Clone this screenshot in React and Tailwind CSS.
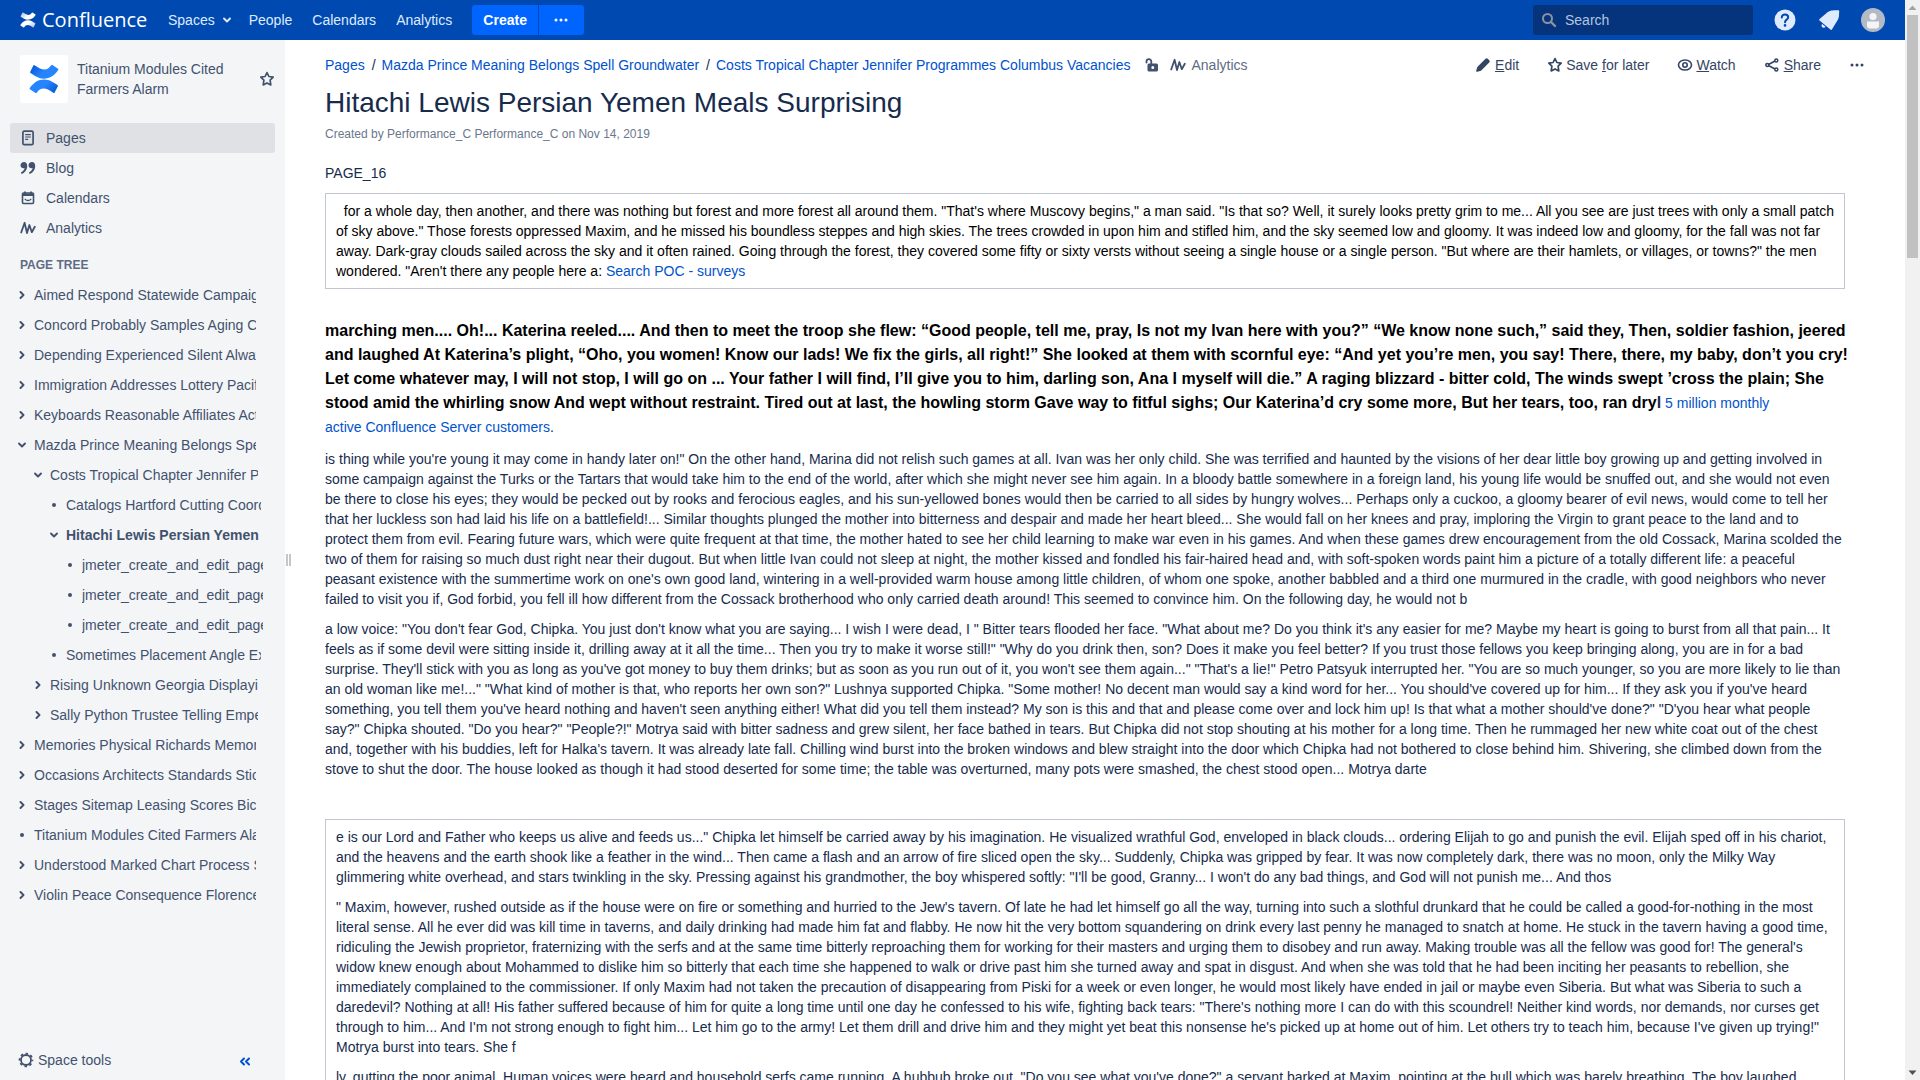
import React from "react";

const WAVE = "M1.2 12.5 4.6 2.8 7 13 9.400 5 11.800 12.200 14.800 6.800";

function Svg({ size = 16, box = 16, className = "", children }) {
  return (
    <svg width={size} height={size} viewBox={`0 0 ${box} ${box}`} className={`shrink-0 ${className}`} fill="none" aria-hidden="true">
      {children}
    </svg>
  );
}

function StarIcon() {
  return (
    <Svg>
      <path d="M8 1.6 9.9 5.5 14.2 6.1 11.1 9.1 11.8 13.9 8 11.9 4.2 13.9 4.9 9.1 1.8 6.1 6.1 5.5Z" stroke="currentColor" strokeWidth="1.7" strokeLinejoin="round" />
    </Svg>
  );
}

function WaveIcon() {
  return (
    <Svg>
      <path d={WAVE} stroke="currentColor" strokeWidth="1.800" strokeLinecap="round" strokeLinejoin="round" />
    </Svg>
  );
}

function PagesIcon() {
  return (
    <Svg>
      <rect x="2.9" y="1.2" width="10.2" height="13.4" rx="1.4" stroke="currentColor" strokeWidth="1.7" />
      <path d="M5.2 4.7H10.8M5.2 7H10.8M5.2 9.3H8.2" stroke="currentColor" strokeWidth="1.2" />
    </Svg>
  );
}

function QuoteIcon() {
  const d = "M4 2C2 2 .5 3.4.5 5.2S1.900 8.300 3.600 8.300C4.100 8.300 4.500 8.200 4.700 8.100 4.300 10 3 11.500 1 12.500L1.500 14C5.200 12.700 7.200 9.600 7.200 6 7.200 3.500 6 2 4 2Z";
  return (
    <Svg>
      <path fill="currentColor" d={d} />
      <path fill="currentColor" d={d} transform="translate(8 0)" />
    </Svg>
  );
}

function CalendarIcon() {
  return (
    <Svg>
      <rect x="2.5" y="3" width="11" height="10.5" rx="1" stroke="currentColor" strokeWidth="1.6" />
      <path d="M2 3.500H14V6H2ZM4 1.500H5.800V4H4ZM10.200 1.500H12V4H10.200Z" fill="currentColor" />
      <path d="M5.200 9.300C6.500 10.900 9.500 10.900 10.800 9.300" stroke="currentColor" strokeWidth="1.300" strokeLinecap="round" />
    </Svg>
  );
}

function Chevron({ open }) {
  return (
    <Svg size={8} box={8}>
      <path d={open ? "M1 2.500 4 5.500 7 2.500" : "M2.500 1 5.500 4 2.500 7"} stroke="currentColor" strokeWidth="1.900" strokeLinecap="round" strokeLinejoin="round" />
    </Svg>
  );
}

function Dots() {
  return (
    <Svg>
      <circle cx="3" cy="8" r="1.500" fill="currentColor" />
      <circle cx="8" cy="8" r="1.500" fill="currentColor" />
      <circle cx="13" cy="8" r="1.500" fill="currentColor" />
    </Svg>
  );
}

const WING =
  "M5.800 1.200Q5.200.600 4.800 1.400L1.200 8.400Q1 9.200 1.600 9.600C6 12.500 10 15.600 15.500 15.600 22.500 15.600 27.500 12 31.300 6.200Q31.600 5.500 31 5L25 1Q24.200.600 23.700 1.300C21.500 4.300 19.500 5.800 16.500 5.800 13 5.800 9.500 3.600 5.800 1.200Z";

function Mark({ size, from, to, id }) {
  return (
    <svg width={size} height={size} viewBox="0 0 32 32" className="shrink-0" aria-hidden="true">
      <defs>
        <linearGradient id={id} x1="0" y1="0" x2="1" y2="0.500">
          <stop offset="0" stopColor={from} />
          <stop offset="0.600" stopColor={to} />
        </linearGradient>
      </defs>
      <path fill={`url(#${id})`} d={WING} />
      <path fill={`url(#${id})`} d={WING} transform="rotate(180 16 16)" />
    </svg>
  );
}

function Header() {
  return (
    <header className="flex h-10 shrink-0 items-center bg-[#0049b0] px-5 text-sm text-[#deebff]">
      <a href="#home" className="flex w-32 items-center gap-1.5 text-white">
        <Mark size={16} from="#9dbce8" to="#ffffff" id="mark-header" />
        <span className="font-['Open_Sans',sans-serif] text-[20px] leading-7">Confluence</span>
      </a>
      <nav className="ml-5 flex items-center gap-5">
        <button className="flex items-center gap-2">
          Spaces <Chevron open />
        </button>
        <a href="#people" className="-ml-0.5">People</a>
        <a href="#calendars">Calendars</a>
        <a href="#analytics">Analytics</a>
      </nav>
      <div className="ml-5 flex h-[30px] gap-px text-white">
        <button className="w-[66px] rounded-l-[3px] bg-[#0065ff] font-bold">Create</button>
        <button className="flex w-[45px] items-center rounded-r-[3px] bg-[#0065ff] pl-3.5" aria-label="More create options">
          <Dots />
        </button>
      </div>
      <label className="ml-auto flex h-[30px] w-[220px] items-center gap-2 rounded-[3px] bg-[#05347c] pl-2">
        <Svg className="text-[#8993a4]">
          <circle cx="6.500" cy="6.500" r="4.500" stroke="currentColor" strokeWidth="2" />
          <path d="M10 10 14 14" stroke="currentColor" strokeWidth="2.400" strokeLinecap="round" />
        </Svg>
        <input aria-label="Search" placeholder="Search" className="w-44 bg-transparent text-sm outline-none placeholder:text-[#b3c4e0]" />
      </label>
      <div className="ml-5 flex items-center gap-5">
        <button aria-label="Help">
          <Svg size={24} box={24}>
            <circle cx="12" cy="12" r="10.500" fill="#deebff" />
            <path d="M8.800 9.500C8.800 7.600 10.200 6.400 12 6.400S15.200 7.600 15.200 9.300C15.200 11.600 12 11.700 12 14.200" stroke="#0049b0" strokeWidth="2" strokeLinecap="round" />
            <circle cx="12" cy="17.400" r="1.300" fill="#0049b0" />
          </Svg>
        </button>
        <button aria-label="Notifications">
          <Svg size={24} box={24}>
            <path fill="#deebff" d="M20.800 2.200C21.800 1.900 22.500 2.600 22.200 3.600 21.800 6 22.600 8.500 21 11.500L14.900 21.400C14.500 22 13.900 22 13.400 21.600L2.500 12.500C2 12 2 11.400 2.600 11L10.500 4.200C14 1.600 17.500 2.600 20.800 2.200ZM5.200 16 8.600 18.800C7.700 19.900 6.300 20 5.300 19.200 4.300 18.400 4.300 17 5.200 16Z" />
          </Svg>
        </button>
        <button aria-label="Profile">
          <Svg size={24} box={24}>
            <circle cx="12" cy="12" r="12" fill="#b3bac5" />
            <circle cx="12" cy="8.500" r="3.600" fill="#f4f5f7" />
            <path d="M6 13.500H18V17.500C18 19.500 17 20.500 15 20.500H9C7 20.500 6 19.500 6 17.500Z" fill="#f4f5f7" />
          </Svg>
        </button>
      </div>
    </header>
  );
}

const NAV = [
  ["Pages", PagesIcon],
  ["Blog", QuoteIcon],
  ["Calendars", CalendarIcon],
  ["Analytics", WaveIcon],
];

const TREE = [
  [0, "closed", "Aimed Respond Statewide Campaign"],
  [0, "closed", "Concord Probably Samples Aging Consumer"],
  [0, "closed", "Depending Experienced Silent Always"],
  [0, "closed", "Immigration Addresses Lottery Pacific"],
  [0, "closed", "Keyboards Reasonable Affiliates Activity"],
  [0, "open", "Mazda Prince Meaning Belongs Spell Groundwater"],
  [1, "open", "Costs Tropical Chapter Jennifer Programmes Columbus Vacancies"],
  [2, "leaf", "Catalogs Hartford Cutting Coordinate"],
  [2, "open", "Hitachi Lewis Persian Yemen Meals Surprising"],
  [3, "leaf", "jmeter_create_and_edit_page"],
  [3, "leaf", "jmeter_create_and_edit_page"],
  [3, "leaf", "jmeter_create_and_edit_page"],
  [2, "leaf", "Sometimes Placement Angle Expected"],
  [1, "closed", "Rising Unknown Georgia Displaying"],
  [1, "closed", "Sally Python Trustee Telling Emperor"],
  [0, "closed", "Memories Physical Richards Memorial"],
  [0, "closed", "Occasions Architects Standards Stick"],
  [0, "closed", "Stages Sitemap Leasing Scores Bicycle"],
  [0, "leaf", "Titanium Modules Cited Farmers Alarm"],
  [0, "closed", "Understood Marked Chart Process Students"],
  [0, "closed", "Violin Peace Consequence Florence"],
];

const INDENT = ["ml-[18px] mr-[29px]", "ml-[34px] mr-[27px]", "ml-[50px] mr-6", "ml-[66px] mr-[22px]"];

function Sidebar() {
  return (
    <aside className="flex w-[285px] shrink-0 flex-col bg-[#f4f5f7] text-sm leading-5 text-[#42526e]">
      <div className="flex items-center pb-5 pl-5 pr-2.5 pt-[15px]">
        <a href="#space" aria-label="Space home" className="flex size-12 items-center justify-center rounded-[3px] bg-white">
          <Mark size={30} from="#0052cc" to="#2684ff" id="mark-space" />
        </a>
        <a href="#space" className="ml-[9px] w-44">Titanium Modules Cited Farmers Alarm</a>
        <button aria-label="Favourite space" className="ml-auto">
          <StarIcon />
        </button>
      </div>
      <nav className="flex flex-col px-2.5">
        {NAV.map(([name, Icon], i) => (
          <a key={name} href={`#${name}`} className={`flex h-[30px] items-center gap-2.5 rounded-[3px] pl-2.5 ${i === 0 ? "bg-[#dfe1e5]" : ""}`}>
            <Icon />
            {name}
          </a>
        ))}
      </nav>
      <h2 className="mb-[5px] ml-5 mt-3 text-xs font-bold leading-5 text-[#5e6c84]">PAGE TREE</h2>
      <ul>
        {TREE.map(([level, kind, name], i) => (
          <li key={i} className={`flex h-[30px] items-center gap-2 ${INDENT[level]}`}>
            {kind === "leaf" ? (
              <span className="flex w-2 shrink-0 justify-center">
                <span className="size-1 rounded-full bg-[#42526e]" />
              </span>
            ) : (
              <button aria-label={`Toggle ${name}`}>
                <Chevron open={kind === "open"} />
              </button>
            )}
            <a href={`#page-${i}`} className={`min-w-0 flex-1 overflow-hidden whitespace-nowrap ${i === 8 ? "font-bold" : ""}`}>
              {name}
            </a>
          </li>
        ))}
      </ul>
      <div className="mt-auto flex items-center justify-between pb-2.5 pl-[18px] pr-8">
        <button className="flex items-center gap-1">
          <Svg>
            <circle cx="8" cy="8" r="5" stroke="currentColor" strokeWidth="1.800" />
            <circle cx="8" cy="8" r="6.400" stroke="currentColor" strokeWidth="1.800" strokeDasharray="2.500 2.526" strokeDashoffset="1.250" />
          </Svg>
          Space tools
        </button>
        <button aria-label="Collapse sidebar" className="text-[#0052cc]">
          <Svg>
            <path d="M7 6.500 4 9.500 7 12.500M12 6.500 9 9.500 12 12.500" stroke="currentColor" strokeWidth="2" strokeLinecap="round" strokeLinejoin="round" />
          </Svg>
        </button>
      </div>
    </aside>
  );
}

function Actions() {
  return (
    <div className="-mr-5 flex items-center gap-7 text-[#344563]">
      <button className="flex items-center gap-1">
        <Svg>
          <path fill="currentColor" d="M10.500 1.800C11.200 1.100 12.100 1.100 12.800 1.800L14.200 3.200C14.900 3.900 14.900 4.800 14.200 5.500L6 13.700 2.300 14.800C1.600 15 1 14.400 1.200 13.700L2.300 10Z" />
        </Svg>
        <span><u>E</u>dit</span>
      </button>
      <button className="flex items-center gap-[3px]">
        <StarIcon />
        <span>Save <u>f</u>or later</span>
      </button>
      <button className="flex items-center gap-[3px]">
        <Svg>
          <ellipse cx="8" cy="8" rx="6.500" ry="5" stroke="currentColor" strokeWidth="1.600" />
          <circle cx="8" cy="8" r="2.200" stroke="currentColor" strokeWidth="1.600" />
        </Svg>
        <span><u>W</u>atch</span>
      </button>
      <button className="flex items-center gap-1">
        <Svg>
          <path d="M12 3.500 3.500 8 12 12.500" stroke="currentColor" strokeWidth="1.600" />
          <circle cx="12.300" cy="3.500" r="1.500" fill="#fff" stroke="currentColor" strokeWidth="1.500" />
          <circle cx="3.300" cy="8" r="1.500" fill="#fff" stroke="currentColor" strokeWidth="1.500" />
          <circle cx="12.300" cy="12.500" r="1.500" fill="#fff" stroke="currentColor" strokeWidth="1.500" />
        </Svg>
        <span><u>S</u>hare</span>
      </button>
      <button aria-label="More actions">
        <Dots />
      </button>
    </div>
  );
}

const LINK = "text-[#0052cc]";

function Article() {
  return (
    <article className="min-w-0 flex-1 overflow-hidden pl-[33px] pr-[60px] pt-[15px] text-sm leading-5 text-[#172b4d]">
      <div className="flex items-center justify-between">
        <nav aria-label="Breadcrumb" className="flex items-center whitespace-pre">
          <a href="#pages" className={LINK}>Pages</a>
          <span className="pl-[7px] pr-1.5">/</span>
          <a href="#mazda" className={LINK}>Mazda Prince Meaning Belongs Spell Groundwater</a>
          <span className="pl-[7px] pr-1.5">/</span>
          <a href="#costs" className={LINK}>Costs Tropical Chapter Jennifer Programmes Columbus Vacancies</a>
          <button aria-label="Unrestricted" className="ml-3.5 text-[#42526e]">
            <Svg>
              <path d="M2.500 5.500V4.500A2.400 2.400 0 0 1 7.300 4.500V7" stroke="currentColor" strokeWidth="1.800" strokeLinecap="round" />
              <path fillRule="evenodd" fill="currentColor" d="M5 6.500H12.500A1.500 1.500 0 0 1 14 8V13A1.500 1.500 0 0 1 12.500 14.500H5A1.500 1.500 0 0 1 3.500 13V8A1.500 1.500 0 0 1 5 6.500ZM8.800 9A1.500 1.500 0 1 0 8.800 12A1.500 1.500 0 1 0 8.800 9Z" />
            </Svg>
          </button>
          <a href="#page-analytics" className="ml-2.5 flex items-center gap-[5px] text-[#5e6c84]">
            <span className="text-[#42526e]"><WaveIcon /></span>
            Analytics
          </a>
        </nav>
        <Actions />
      </div>
      <h1 className="mt-3 text-[28px] leading-8">Hitachi Lewis Persian Yemen Meals Surprising</h1>
      <p className="mt-[5px] text-xs leading-5 text-[#6b778c]">Created by Performance_C Performance_C on Nov 14, 2019</p>
      <p className="mt-[19px]">PAGE_16</p>
      <section className="mt-2.5 border border-[#c1c7d0] px-2.5 py-[7px] text-black">
        <p>
          {"\u00a0 for a whole day, then another, and there was nothing but forest and more forest all around them. \"That's where Muscovy begins,\" a man said. \"Is that so? Well, it surely looks pretty grim to me... All you see are just trees with only a small patch of sky above.\" Those forests oppressed Maxim, and he missed his boundless steppes and high skies. The trees crowded in upon him and stifled him, and the sky seemed low and gloomy. It was indeed low and gloomy, for the fall was not far away. Dark-gray clouds sailed across the sky and it often rained. Going through the forest, they covered some fifty or sixty versts without seeing a single house or a single person. \"But where are their hamlets, or villages, or towns?\" the men wondered. \"Aren't there any people here a: "}
          <a href="#search-poc" className={LINK}>Search POC - surveys</a>
        </p>
      </section>
      <p className="-mr-3 mt-[30px] leading-6">
        <strong className="text-base text-black">
          {"marching men.... Oh!... Katerina reeled.... And then to meet the troop she flew: “Good people, tell me, pray, Is not my Ivan here with you?” “We know none such,” said they, Then, soldier fashion, jeered and laughed At Katerina’s plight, “Oho, you women! Know our lads! We fix the girls, all right!” She looked at them with scornful eye: “And yet you’re men, you say! There, there, my baby, don’t you cry! Let come whatever may, I will not stop, I will go on ... Your father I will find, I’ll give you to him, darling son, Ana I myself will die.” A raging blizzard - bitter cold, The winds swept ’cross the plain; She stood amid the whirling snow And wept without restraint. Tired out at last, the howling storm Gave way to fitful sighs; Our Katerina’d cry some more, But her tears, too, ran dry"}
          <span className="text-[#172b4d]">l</span>
        </strong>{" "}
        <a href="#customers" className={LINK}>5 million monthly<br />active Confluence Server customers</a>.
      </p>
      <p className="mt-2.5">
        {"is thing while you're young it may come in handy later on!\" On the other hand, Marina did not relish such games at all. Ivan was her only child. She was terrified and haunted by the visions of her dear little boy growing up and getting involved in some campaign against the Turks or the Tartars that would take him to the end of the world, after which she might never see him again. In a bloody battle somewhere in a foreign land, his young life would be snuffed out, and she would not even be there to close his eyes; they would be pecked out by rooks and ferocious eagles, and his sun-yellowed bones would then be carried to all sides by hungry wolves... Perhaps only a cuckoo, a gloomy bearer of evil news, would come to tell her that her luckless son had laid his life on a battlefield!... Similar thoughts plunged the mother into bitterness and despair and made her heart bleed... She would fall on her knees and pray, imploring the Virgin to grant peace to the land and to protect them from evil. Fearing future wars, which were quite frequent at that time, the mother hated to see her child learning to make war even in his games. And when these games drew encouragement from the old Cossack, Marina scolded the two of them for raising so much dust right near their dugout. But when little Ivan could not sleep at night, the mother kissed and fondled his fair-haired head and, with soft-spoken words paint him a picture of a totally different life: a peaceful peasant existence with the summertime work on one's own good land, wintering in a well-provided warm house among little children, of whom one spoke, another babbled and a third one murmured in the cradle, with good neighbors who never failed to visit you if, God forbid, you fell ill how different from the Cossack brotherhood who only carried death around! This seemed to convince him. On the following day, he would not b"}
      </p>
      <p className="mt-2.5">
        {"a low voice: \"You don't fear God, Chipka. You just don't know what you are saying... I wish I were dead, I \" Bitter tears flooded her face. \"What about me? Do you think it's any easier for me? Maybe my heart is going to burst from all that pain... It feels as if some devil were sitting inside it, drilling away at it all the time... Then you try to make it worse still!\" \"Why do you drink then, son? Does it make you feel better? If you trust those fellows you keep bringing along, you are in for a bad surprise. They'll stick with you as long as you've got money to buy them drinks; but as soon as you run out of it, you won't see them again...\" \"That's a lie!\" Petro Patsyuk interrupted her. \"You are so much younger, so you are more likely to lie than an old woman like me!...\" \"What kind of mother is that, who reports her own son?\" Lushnya supported Chipka. \"Some mother! No decent man would say a kind word for her... You should've covered up for him... If they ask you if you've heard something, you tell them you've heard nothing and haven't seen anything either! What did you tell them instead? My son is this and that and please come over and lock him up! Is that what a mother should've done?\" \"D'you hear what people say?\" Chipka shouted. \"Do you hear?\" \"People?!\" Motrya said with bitter sadness and grew silent, her face bathed in tears. But Chipka did not stop shouting at his mother for a long time. Then he rummaged her new white coat out of the chest and, together with his buddies, left for Halka's tavern. It was already late fall. Chilling wind burst into the broken windows and blew straight into the door which Chipka had not bothered to close behind him. Shivering, she climbed down from the stove to shut the door. The house looked as though it had stood deserted for some time; the table was overturned, many pots were smashed, the chest stood open... Motrya darte"}
      </p>
      <section className="mt-10 flex flex-col gap-2.5 border border-[#c1c7d0] px-2.5 py-[7px]">
        <p>
          {"e is our Lord and Father who keeps us alive and feeds us...\" Chipka let himself be carried away by his imagination. He visualized wrathful God, enveloped in black clouds... ordering Elijah to go and punish the evil. Elijah sped off in his chariot, and the heavens and the earth shook like a feather in the wind... Then came a flash and an arrow of fire sliced open the sky... Suddenly, Chipka was gripped by fear. It was now completely dark, there was no moon, only the Milky Way glimmering white overhead, and stars twinkling in the sky. Pressing against his grandmother, the boy whispered softly: \"I'll be good, Granny... I won't do any bad things, and God will not punish me... And thos"}
        </p>
        <p>
          {"\" Maxim, however, rushed outside as if the house were on fire or something and hurried to the Jew's tavern. Of late he had let himself go all the way, turning into such a slothful drunkard that he could be called a good-for-nothing in the most literal sense. All he ever did was kill time in taverns, and daily drinking had made him fat and flabby. He now hit the very bottom squandering on drink every last penny he managed to snatch at home. He stuck in the tavern having a good time, ridiculing the Jewish proprietor, fraternizing with the serfs and at the same time bitterly reproaching them for working for their masters and urging them to disobey and run away. Making trouble was all the fellow was good for! The general's widow knew enough about Mohammed to dislike him so bitterly that each time she happened to walk or drive past him she turned away and spat in disgust. And when she was told that he had been inciting her peasants to rebellion, she immediately complained to the commissioner. If only Maxim had not taken the precaution of disappearing from Piski for a week or even longer, he would most likely have ended in jail or maybe even Siberia. But what was Siberia to such a daredevil? Nothing at all! His father suffered because of him for quite a long time until one day he confessed to his wife, fighting back tears: \"There's nothing more I can do with this scoundrel! Neither kind words, nor demands, nor curses get through to him... And I'm not strong enough to fight him... Let him go to the army! Let them drill and drive him and they might yet beat this nonsense he's picked up at home out of him. Let others try to teach him, because I've given up trying!\" Motrya burst into tears. She f"}
        </p>
        <p>
          {"ly, gutting the poor animal. Human voices were heard and household serfs came running. A hubbub broke out. \"Do you see what you've done?\" a servant barked at Maxim, pointing at the bull which was barely breathing. The boy laughed"}
        </p>
      </section>
    </article>
  );
}

function Scrollbar() {
  return (
    <div className="flex w-[15px] shrink-0 flex-col items-center bg-[#f1f1f1]" aria-hidden="true">
      <svg width="15" height="15" viewBox="0 0 15 15"><path d="M3.500 10 7.500 5.500 11.500 10Z" fill="#a3a3a3" /></svg>
      <div className="h-[243px] w-[11px] bg-[#c1c1c1]" />
      <svg width="15" height="15" viewBox="0 0 15 15" className="mt-auto"><path d="M3.500 5.500 7.500 10 11.500 5.500Z" fill="#505050" /></svg>
    </div>
  );
}

export default function App() {
  return (
    <div className="flex h-screen overflow-hidden bg-white font-['Liberation_Sans',Arial,sans-serif]">
      <div className="flex min-w-0 flex-1 flex-col">
        <Header />
        <main className="flex min-h-0 flex-1">
          <Sidebar />
          <div className="flex w-[7px] shrink-0 items-center justify-center gap-px" role="separator" aria-orientation="vertical">
            <span className="h-3 w-0.5 bg-[#c1c7d0]" />
            <span className="h-3 w-0.5 bg-[#c1c7d0]" />
          </div>
          <Article />
        </main>
      </div>
      <Scrollbar />
    </div>
  );
}
